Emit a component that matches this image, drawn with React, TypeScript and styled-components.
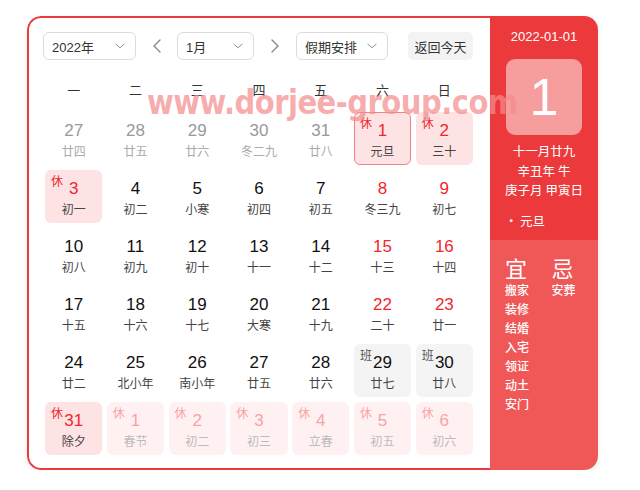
import * as React from 'react';
import styled, { createGlobalStyle, css } from 'styled-components';

const GlobalStyle = createGlobalStyle`
  html, body {
    margin: 0;
    padding: 0;
    background: #fff;
  }
  body {
    font-family: "Liberation Sans", Arial, "Noto Sans CJK SC", sans-serif;
    color: #222;
  }
  * {
    box-sizing: border-box;
  }
`;

const Page = styled.div`
  position: relative;
  padding: 16px 0 0 27px;
`;

const Card = styled.div`
  display: flex;
  width: 571px;
  height: 454px;
  border-radius: 14px;
  overflow: hidden;
  box-shadow: 0 2px 6px rgba(0, 0, 0, 0.08);
`;

const Main = styled.div`
  display: flex;
  flex-direction: column;
  width: 463px;
  padding: 14px 17px 0 14px;
  border: 2px solid #ec3a3c;
  border-right: none;
  border-radius: 14px 0 0 14px;
  background: #fff;
`;

const Toolbar = styled.div`
  display: flex;
  align-items: center;
  height: 28px;
`;

const Select = styled.div<{ $w: number }>`
  display: flex;
  align-items: center;
  justify-content: space-between;
  width: ${(p) => p.$w}px;
  height: 28px;
  padding: 0 8px 0 8px;
  border: 1px solid #dcdcdc;
  border-radius: 6px;
  font-size: 13px;
  color: #333;
  background: #fff;
`;

const Arrow = styled.div<{ $w: number }>`
  display: flex;
  align-items: center;
  justify-content: center;
  width: ${(p) => p.$w}px;
  height: 28px;
  color: #888;
`;

const Spacer = styled.div`
  flex: 1;
`;

const TodayButton = styled.div`
  display: flex;
  align-items: center;
  justify-content: center;
  width: 65px;
  height: 28px;
  border-radius: 5px;
  background: #f3f3f3;
  font-size: 13px;
  color: #333;
`;

const WeekRow = styled.div`
  display: grid;
  grid-template-columns: repeat(7, 1fr);
  column-gap: 4.5px;
  margin: 20px 0 10px 2px;
  height: 22px;
  line-height: 22px;
  font-size: 13px;
  color: #333;
  text-align: center;
`;

const Grid = styled.div`
  display: grid;
  grid-template-columns: repeat(7, 1fr);
  grid-auto-rows: 53px;
  column-gap: 4.5px;
  row-gap: 5px;
  margin-left: 2px;
`;

type Kind = 'normal' | 'prev' | 'rest' | 'restNext' | 'work';

const Cell = styled.div<{ $kind: Kind; $selected?: boolean }>`
  position: relative;
  display: flex;
  flex-direction: column;
  align-items: center;
  padding-top: 7px;
  border-radius: 6px;
  border: 1px solid transparent;
  ${(p) =>
    p.$kind === 'rest' &&
    css`
      background: #fde3e4;
    `}
  ${(p) =>
    p.$kind === 'restNext' &&
    css`
      background: #fff1f1;
    `}
  ${(p) =>
    p.$kind === 'work' &&
    css`
      background: #f4f4f4;
    `}
  ${(p) =>
    p.$selected &&
    css`
      border-color: #f08283;
    `}
`;

const DayNum = styled.div<{ $color: string }>`
  font-size: 17px;
  line-height: 22px;
  color: ${(p) => p.$color};
`;

const Lunar = styled.div<{ $color: string }>`
  font-family: "Noto Sans CJK SC", sans-serif;
  font-size: 12px;
  line-height: 17px;
  color: ${(p) => p.$color};
`;

const Tag = styled.span<{ $color: string }>`
  position: absolute;
  top: 2px;
  left: 5px;
  font-family: "Noto Sans CJK SC", sans-serif;
  font-size: 12px;
  line-height: 16px;
  color: ${(p) => p.$color};
`;

const Side = styled.div`
  display: flex;
  flex-direction: column;
  width: 108px;
  color: #fff;
  font-family: "Noto Sans CJK SC", sans-serif;
`;

const SideTop = styled.div`
  display: flex;
  flex-direction: column;
  align-items: center;
  height: 224px;
  padding-top: 12px;
  background: #ec3a3c;
`;

const DateText = styled.div`
  font-family: "Liberation Sans", Arial, sans-serif;
  font-size: 13px;
  line-height: 18px;
`;

const BigDay = styled.div`
  display: flex;
  align-items: center;
  justify-content: center;
  width: 76px;
  height: 76px;
  margin-top: 13px;
  border-radius: 9px;
  background: rgba(255, 255, 255, 0.5);
  font-family: "Liberation Sans", Arial, sans-serif;
  font-size: 52px;
  font-weight: 300;
`;

const LunarInfo = styled.div`
  margin-top: 6px;
  font-size: 12.5px;
  line-height: 19.5px;
  text-align: center;
`;

const Festival = styled.div`
  align-self: flex-start;
  margin: 12px 0 0 15px;
  font-size: 12.5px;
  line-height: 18px;
`;

const SideBottom = styled.div`
  display: flex;
  flex: 1;
  padding: 14px 0 0 15px;
  background: #f05858;
`;

const AdviceCol = styled.div`
  display: flex;
  flex-direction: column;
  width: 55px;
`;

const AdviceHead = styled.div`
  font-size: 22px;
  line-height: 26px;
`;

const AdviceItem = styled.div`
  font-size: 12px;
  line-height: 19px;
  font-weight: 500;
`;

const Watermark = styled.div`
  position: absolute;
  left: 147px;
  top: 86px;
  font-family: "DejaVu Sans", sans-serif;
  font-weight: bold;
  font-size: 33px;
  line-height: 33px;
  letter-spacing: -0.6px;
  transform: scaleX(0.88);
  transform-origin: left center;
  color: rgba(244, 140, 142, 0.72);
  white-space: nowrap;
  pointer-events: none;
`;

const Chevron = () => (
  <svg width="14" height="14" viewBox="0 0 24 24" fill="none" stroke="#888" strokeWidth="1.6" strokeLinecap="round" strokeLinejoin="round">
    <path d="M5 9l7 6 7-6" />
  </svg>
);

const Left = () => (
  <svg width="10" height="16" viewBox="0 0 10 16" fill="none" stroke="#888" strokeWidth="1.4" strokeLinecap="round" strokeLinejoin="round">
    <path d="M8 2L2 8l6 6" />
  </svg>
);

const Right = () => (
  <svg width="10" height="16" viewBox="0 0 10 16" fill="none" stroke="#888" strokeWidth="1.4" strokeLinecap="round" strokeLinejoin="round">
    <path d="M2 2l6 6-6 6" />
  </svg>
);

type Day = {
  n: number;
  l: string;
  kind: Kind;
  tag?: '休' | '班';
  weekend?: boolean;
  selected?: boolean;
};

const weekdays = ['一', '二', '三', '四', '五', '六', '日'];

const d = (n: number, l: string, kind: Kind = 'normal', extra: Partial<Day> = {}): Day => ({ n, l, kind, ...extra });

const days: Day[] = [
  d(27, '廿四', 'prev'),
  d(28, '廿五', 'prev'),
  d(29, '廿六', 'prev'),
  d(30, '冬二九', 'prev'),
  d(31, '廿八', 'prev'),
  d(1, '元旦', 'rest', { tag: '休', weekend: true, selected: true }),
  d(2, '三十', 'rest', { tag: '休', weekend: true }),
  d(3, '初一', 'rest', { tag: '休', weekend: true }),
  d(4, '初二'),
  d(5, '小寒'),
  d(6, '初四'),
  d(7, '初五'),
  d(8, '冬三九', 'normal', { weekend: true }),
  d(9, '初七', 'normal', { weekend: true }),
  d(10, '初八'),
  d(11, '初九'),
  d(12, '初十'),
  d(13, '十一'),
  d(14, '十二'),
  d(15, '十三', 'normal', { weekend: true }),
  d(16, '十四', 'normal', { weekend: true }),
  d(17, '十五'),
  d(18, '十六'),
  d(19, '十七'),
  d(20, '大寒'),
  d(21, '十九'),
  d(22, '二十', 'normal', { weekend: true }),
  d(23, '廿一', 'normal', { weekend: true }),
  d(24, '廿二'),
  d(25, '北小年'),
  d(26, '南小年'),
  d(27, '廿五'),
  d(28, '廿六'),
  d(29, '廿七', 'work', { tag: '班' }),
  d(30, '廿八', 'work', { tag: '班' }),
  d(31, '除夕', 'rest', { tag: '休', weekend: true }),
  d(1, '春节', 'restNext', { tag: '休' }),
  d(2, '初二', 'restNext', { tag: '休' }),
  d(3, '初三', 'restNext', { tag: '休' }),
  d(4, '立春', 'restNext', { tag: '休' }),
  d(5, '初五', 'restNext', { tag: '休' }),
  d(6, '初六', 'restNext', { tag: '休' }),
];

function numColor(day: Day) {
  if (day.kind === 'prev') return '#999';
  if (day.kind === 'restNext') return '#f7a3a5';
  if (day.weekend) return '#f2262b';
  return '#111';
}

function lunarColor(day: Day) {
  if (day.kind === 'prev') return '#aaa';
  if (day.kind === 'restNext') return '#bbb';
  return '#444';
}

function tagColor(day: Day) {
  if (day.tag === '班') return '#555';
  if (day.kind === 'restNext') return '#f7a3a5';
  return '#f2262b';
}

const yi = ['搬家', '装修', '结婚', '入宅', '领证', '动土', '安门'];
const ji = ['安葬'];

export default function App() {
  return (
    <>
      <GlobalStyle />
      <Page>
        <Card>
          <Main>
            <Toolbar>
              <Select $w={93}>
                2022年
                <Chevron />
              </Select>
              <Arrow $w={41}>
                <Left />
              </Arrow>
              <Select $w={77}>
                1月
                <Chevron />
              </Select>
              <Arrow $w={42}>
                <Right />
              </Arrow>
              <Select $w={92}>
                假期安排
                <Chevron />
              </Select>
              <Spacer />
              <TodayButton>返回今天</TodayButton>
            </Toolbar>
            <WeekRow>
              {weekdays.map((w) => (
                <div key={w}>{w}</div>
              ))}
            </WeekRow>
            <Grid>
              {days.map((day, i) => (
                <Cell key={i} $kind={day.kind} $selected={day.selected}>
                  {day.tag && <Tag $color={tagColor(day)}>{day.tag}</Tag>}
                  <DayNum $color={numColor(day)}>{day.n}</DayNum>
                  <Lunar $color={lunarColor(day)}>{day.l}</Lunar>
                </Cell>
              ))}
            </Grid>
          </Main>
          <Side>
            <SideTop>
              <DateText>2022-01-01</DateText>
              <BigDay>1</BigDay>
              <LunarInfo>
                <div>十一月廿九</div>
                <div>辛丑年 牛</div>
                <div>庚子月 甲寅日</div>
              </LunarInfo>
              <Festival>{'\u2022\u2009元旦'}</Festival>
            </SideTop>
            <SideBottom>
              <AdviceCol>
                <AdviceHead>宜</AdviceHead>
                {yi.map((t) => (
                  <AdviceItem key={t}>{t}</AdviceItem>
                ))}
              </AdviceCol>
              <AdviceCol>
                <AdviceHead>忌</AdviceHead>
                {ji.map((t) => (
                  <AdviceItem key={t}>{t}</AdviceItem>
                ))}
              </AdviceCol>
            </SideBottom>
          </Side>
        </Card>
        <Watermark>www.dorjee-group.com</Watermark>
      </Page>
    </>
  );
}
